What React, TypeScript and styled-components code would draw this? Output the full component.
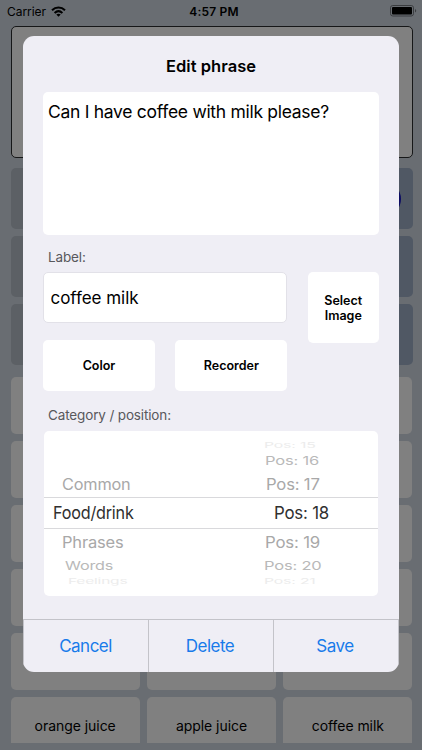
import React from "react";
import styled, { createGlobalStyle } from "styled-components";

const Global = createGlobalStyle`
  * { box-sizing: border-box; }
  body { margin: 0; overflow: hidden; background: #696d72; font-family: Inter, "Liberation Sans", sans-serif; color: #000; }
  button, input, textarea { font: inherit; color: inherit; margin: 0; border: 0; outline: none; }
`;

const Screen = styled.div`
  position: relative;
  width: 422px;
  height: 750px;
  overflow: hidden;
  background: #696d72;
`;

const StatusBar = styled.header`
  height: 26px;
  padding: 0 4px 4px 7px;
  display: grid;
  grid-template-columns: 1fr auto 1fr;
  align-items: center;
  font-size: 12px;
`;

const Carrier = styled.div`
  display: flex;
  align-items: center;
  gap: 5px;
  letter-spacing: -0.05px;
`;

const Clock = styled.div`
  font-weight: 600;
  letter-spacing: 0.2px;
  padding-left: 3px;
`;

const BatterySlot = styled.div`
  display: flex;
  justify-content: flex-end;
`;

const Board = styled.main`
  padding: 0 9.5px 0 10.5px;
`;

const SpeechBox = styled.div`
  height: 132px;
  border: 1px solid #161718;
  border-radius: 5px;
  background: #808080;
`;

const ActionRows = styled.div`
  display: grid;
  grid-template-columns: 1fr 1fr;
  grid-auto-rows: 61px;
  gap: 7px;
  padding-top: 10.4px;
`;

const ActionTile = styled.div<{ $tone: string }>`
  border-radius: 5px;
  background: ${(p) => p.$tone};
  display: flex;
  align-items: center;
  justify-content: flex-end;
  padding-right: 11.5px;
`;

const Ring = styled.span`
  width: 34px;
  height: 34px;
  border: 2px solid #0b0b62;
  border-radius: 50%;
`;

const CardGrid = styled.div`
  display: grid;
  grid-template-columns: repeat(3, 1fr);
  grid-auto-rows: 57px;
  gap: 7px;
  margin-top: 11.6px;
  height: 366px;
  overflow: hidden;
`;

const Card = styled.div`
  display: flex;
  align-items: center;
  justify-content: center;
  border-radius: 5px;
  background: #808080;
  font-size: 14px;
  letter-spacing: -0.05px;
`;

const Dialog = styled.section`
  position: absolute;
  left: 23px;
  top: 36px;
  width: 376px;
  height: 636px;
  border-radius: 11px;
  background: #efeef5;
  display: flex;
  flex-direction: column;
  overflow: hidden;
`;

const DialogBody = styled.div`
  flex: 1;
  padding: 0 20px;
`;

const Title = styled.h1`
  margin: 0;
  height: 56px;
  padding-top: 4px;
  display: flex;
  align-items: center;
  justify-content: center;
  font-size: 16.5px;
  font-weight: 600;
  letter-spacing: 0.05px;
`;

const PhraseInput = styled.textarea`
  display: block;
  width: 336px;
  height: 143px;
  resize: none;
  border-radius: 5px;
  background: #fff;
  padding: 9px 5px;
  font-size: 17.5px;
  line-height: 21px;
  letter-spacing: -0.29px;
`;

const Caption = styled.div<{ $height: number }>`
  height: ${(p) => p.$height}px;
  padding: 7px 0 0 5px;
  display: flex;
  align-items: center;
  font-size: 13.5px;
  letter-spacing: -0.14px;
  color: #58585c;
`;

const FormGrid = styled.div`
  display: grid;
  grid-template-columns: 112px 112px 71px;
  column-gap: 20.4px;
  grid-template-rows: 51px 17px 51px;
`;

const LabelInput = styled.input`
  grid-column: 1 / 3;
  width: 100%;
  height: 51px;
  border: 1px solid #e2e1e8;
  border-radius: 5px;
  background: #fff;
  padding: 0 6.5px;
  font-size: 17px;
  letter-spacing: -0.03px;
`;

const PlainButton = styled.button`
  border-radius: 5px;
  background: #fff;
  padding: 1px 0 0;
  font-size: 12.5px;
  line-height: 14.5px;
  font-weight: 600;
  grid-row: 3;
`;

const ImageButton = styled(PlainButton)`
  grid-column: 3;
  grid-row: 1 / 4;
  height: 71px;
  padding-top: 2px;
`;

const Picker = styled.div`
  width: 334px;
  height: 165px;
  margin-left: 0.5px;
  padding: 10px 0;
  border-radius: 5px;
  background: #fff;
  overflow: hidden;
`;

const PickerRow = styled.div<{ $height: number; $tone: string; $active?: boolean }>`
  height: ${(p) => p.$height}px;
  display: grid;
  grid-template-columns: 220px 1fr;
  grid-template-rows: 100%;
  align-items: center;
  color: ${(p) => p.$tone};
  font-size: 17px;
  line-height: 22px;
  border: solid #d9d9dc;
  border-width: ${(p) => (p.$active ? "1px 0" : "0")};
`;

const Option = styled.span<{ $inset: number; $sx: number; $sy: number; $drop: number }>`
  justify-self: start;
  margin-left: ${(p) => p.$inset}px;
  white-space: nowrap;
  letter-spacing: -0.2px;
  transform: translateY(${(p) => p.$drop}px) scale(${(p) => p.$sx}, ${(p) => p.$sy});
  transform-origin: left center;
`;

const Footer = styled.footer`
  height: 53px;
  display: grid;
  grid-template-columns: 124px 125px 1fr;
  border: 1px solid #c3c3c9;
  border-width: 1px 1px 0;
`;

const FooterButton = styled.button`
  background: transparent;
  padding: 0 1px 1px 0;
  color: #187bea;
  font-size: 17px;
  letter-spacing: -0.5px;
  & + & { border-left: 1px solid #c3c3c9; padding-right: 2px; }
`;

const Wifi = () => (
  <svg width="15" height="11" viewBox="0 0 15 11" fill="none" stroke="#000" strokeWidth="2">
    <path d="M1 4.3C4.7.6 10.3.6 14 4.3" />
    <path d="M3.6 7C6 4.7 9 4.7 11.4 7" />
    <path d="M7.5 10.8 5.3 8.6c1.3-1.2 3.1-1.2 4.4 0Z" fill="#000" stroke="none" />
  </svg>
);

const Battery = () => (
  <svg width="28" height="12" viewBox="0 0 28 12">
    <rect x="0.5" y="0.5" width="23" height="10.5" rx="2.3" fill="none" stroke="#3b3d40" />
    <rect x="2" y="2" width="20" height="7.5" rx="1" fill="#000" />
    <path d="M25 4c1.6.6 1.6 3 0 3.6Z" fill="#3b3d40" />
  </svg>
);

const rows = [
  { h: 10, tone: "#ececec", left: "", right: "Pos: 15", lx: 0, rx: 0.5, lsx: 1, sx: 0.93, sy: 0.45, drop: -1 },
  { h: 19, tone: "#b9b9b9", left: "", right: "Pos: 16", lx: 0, rx: 1, lsx: 1, sx: 0.97, sy: 0.68, drop: 0 },
  { h: 27, tone: "#a8a8a8", left: "Common", right: "Pos: 17", lx: 18.5, rx: 2.5, lsx: 0.96, sx: 0.98, sy: 0.92, drop: 0.3 },
  { h: 32, tone: "#303030", left: "Food/drink", right: "Pos: 18", lx: 9.5, rx: 10.5, lsx: 0.95, sx: 0.99, sy: 1.02, drop: 0 },
  { h: 27, tone: "#a8a8a8", left: "Phrases", right: "Pos: 19", lx: 18.5, rx: 1.5, lsx: 0.97, sx: 0.99, sy: 0.92, drop: -0.3 },
  { h: 19, tone: "#b9b9b9", left: "Words", right: "Pos: 20", lx: 21, rx: 0, lsx: 0.95, sx: 0.97, sy: 0.68, drop: 0.3 },
  { h: 10, tone: "#ececec", left: "Feelings", right: "Pos: 21", lx: 24.5, rx: 0.5, lsx: 0.91, sx: 0.93, sy: 0.45, drop: 1.8 },
];

const cards = [...Array(15).fill(""), "orange juice", "apple juice", "coffee milk"];

export default function App() {
  return (
    <Screen>
      <Global />
      <StatusBar>
        <Carrier>Carrier <Wifi /></Carrier>
        <Clock>4:57 PM</Clock>
        <BatterySlot><Battery /></BatterySlot>
      </StatusBar>
      <Board>
        <SpeechBox />
        <ActionRows>
          {[0, 1, 2].map((i) => (
            <React.Fragment key={i}>
              <ActionTile $tone="#5c6065" />
              <ActionTile $tone="#505864">{i === 0 && <Ring />}</ActionTile>
            </React.Fragment>
          ))}
        </ActionRows>
        <CardGrid>
          {cards.map((name, i) => <Card key={i}>{name}</Card>)}
        </CardGrid>
      </Board>
      <Dialog role="dialog">
        <DialogBody>
          <Title>Edit phrase</Title>
          <PhraseInput defaultValue="Can I have coffee with milk please?" spellCheck={false} />
          <Caption $height={37}>Label:</Caption>
          <FormGrid>
            <LabelInput defaultValue="coffee milk" />
            <ImageButton>Select<br />Image</ImageButton>
            <PlainButton>Color</PlainButton>
            <PlainButton>Recorder</PlainButton>
          </FormGrid>
          <Caption $height={40}>Category / position:</Caption>
          <Picker>
            {rows.map((r) => (
              <PickerRow key={r.right} $height={r.h} $tone={r.tone} $active={r.right === "Pos: 18"}>
                <Option $inset={r.lx} $sx={r.lsx} $sy={r.sy} $drop={r.drop}>{r.left}</Option>
                <Option $inset={r.rx} $sx={r.sx} $sy={r.sy} $drop={r.drop}>{r.right}</Option>
              </PickerRow>
            ))}
          </Picker>
        </DialogBody>
        <Footer>
          <FooterButton>Cancel</FooterButton>
          <FooterButton>Delete</FooterButton>
          <FooterButton>Save</FooterButton>
        </Footer>
      </Dialog>
    </Screen>
  );
}
